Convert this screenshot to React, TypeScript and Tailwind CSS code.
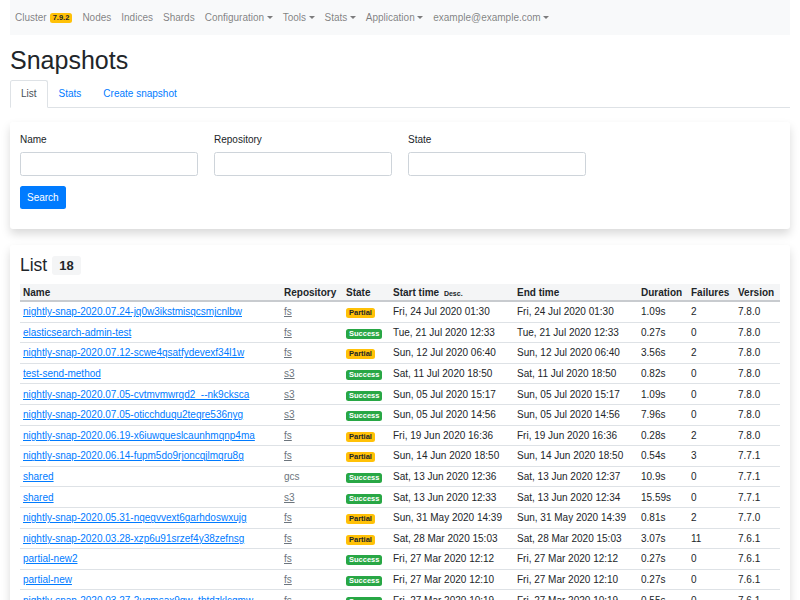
import React from 'react'

type Snapshot = {
  name: string
  repo: string
  state: 'Partial' | 'Success'
  start: string
  end: string
  duration: string
  failures: number
  version: string
}

const snapshots: Snapshot[] = [
  { name: 'nightly-snap-2020.07.24-jq0w3ikstmisqcsmjcnlbw', repo: 'fs', state: 'Partial', start: 'Fri, 24 Jul 2020 01:30', end: 'Fri, 24 Jul 2020 01:30', duration: '1.09s', failures: 2, version: '7.8.0' },
  { name: 'elasticsearch-admin-test', repo: 'fs', state: 'Success', start: 'Tue, 21 Jul 2020 12:33', end: 'Tue, 21 Jul 2020 12:33', duration: '0.27s', failures: 0, version: '7.8.0' },
  { name: 'nightly-snap-2020.07.12-scwe4qsatfydevexf34l1w', repo: 'fs', state: 'Partial', start: 'Sun, 12 Jul 2020 06:40', end: 'Sun, 12 Jul 2020 06:40', duration: '3.56s', failures: 2, version: '7.8.0' },
  { name: 'test-send-method', repo: 's3', state: 'Success', start: 'Sat, 11 Jul 2020 18:50', end: 'Sat, 11 Jul 2020 18:50', duration: '0.82s', failures: 0, version: '7.8.0' },
  { name: 'nightly-snap-2020.07.05-cvtmvmwrqd2_--nk9cksca', repo: 's3', state: 'Success', start: 'Sun, 05 Jul 2020 15:17', end: 'Sun, 05 Jul 2020 15:17', duration: '1.09s', failures: 0, version: '7.8.0' },
  { name: 'nightly-snap-2020.07.05-oticchduqu2teqre536nyg', repo: 's3', state: 'Success', start: 'Sun, 05 Jul 2020 14:56', end: 'Sun, 05 Jul 2020 14:56', duration: '7.96s', failures: 0, version: '7.8.0' },
  { name: 'nightly-snap-2020.06.19-x6iuwqueslcaunhmqnp4ma', repo: 'fs', state: 'Partial', start: 'Fri, 19 Jun 2020 16:36', end: 'Fri, 19 Jun 2020 16:36', duration: '0.28s', failures: 2, version: '7.8.0' },
  { name: 'nightly-snap-2020.06.14-fupm5do9rjoncqjlmqru8g', repo: 'fs', state: 'Partial', start: 'Sun, 14 Jun 2020 18:50', end: 'Sun, 14 Jun 2020 18:50', duration: '0.54s', failures: 3, version: '7.7.1' },
  { name: 'shared', repo: 'gcs', state: 'Success', start: 'Sat, 13 Jun 2020 12:36', end: 'Sat, 13 Jun 2020 12:37', duration: '10.9s', failures: 0, version: '7.7.1' },
  { name: 'shared', repo: 's3', state: 'Success', start: 'Sat, 13 Jun 2020 12:33', end: 'Sat, 13 Jun 2020 12:34', duration: '15.59s', failures: 0, version: '7.7.1' },
  { name: 'nightly-snap-2020.05.31-nqegvvext6garhdoswxujg', repo: 'fs', state: 'Partial', start: 'Sun, 31 May 2020 14:39', end: 'Sun, 31 May 2020 14:39', duration: '0.81s', failures: 2, version: '7.7.0' },
  { name: 'nightly-snap-2020.03.28-xzp6u91srzef4y38zefnsg', repo: 'fs', state: 'Partial', start: 'Sat, 28 Mar 2020 15:03', end: 'Sat, 28 Mar 2020 15:03', duration: '3.07s', failures: 11, version: '7.6.1' },
  { name: 'partial-new2', repo: 'fs', state: 'Success', start: 'Fri, 27 Mar 2020 12:12', end: 'Fri, 27 Mar 2020 12:12', duration: '0.27s', failures: 0, version: '7.6.1' },
  { name: 'partial-new', repo: 'fs', state: 'Success', start: 'Fri, 27 Mar 2020 12:10', end: 'Fri, 27 Mar 2020 12:10', duration: '0.27s', failures: 0, version: '7.6.1' },
  { name: 'nightly-snap-2020.03.27-2uqmsax9qw_tbtdzklcgmw', repo: 'fs', state: 'Success', start: 'Fri, 27 Mar 2020 10:19', end: 'Fri, 27 Mar 2020 10:19', duration: '0.55s', failures: 0, version: '7.6.1' },
]

function Caret() {
  return (
    <span className="ml-[2.5px] inline-block align-[2px] border-x-[3px] border-t-[3px] border-x-transparent border-t-current" />
  )
}

function NavItem({ label, dropdown }: { label: string; dropdown?: boolean }) {
  return (
    <a className="px-[5px] leading-[15px] text-black/50">
      {label}
      {dropdown && <Caret />}
    </a>
  )
}

function StateBadge({ state }: { state: Snapshot['state'] }) {
  if (state === 'Partial') {
    return (
      <span className="inline-block rounded-[2.5px] bg-[#ffc107] px-[3px] text-[7.5px] font-bold leading-[10px] text-[#212529]">
        Partial
      </span>
    )
  }
  return (
    <span className="inline-block rounded-[2.5px] bg-[#28a745] px-[3px] text-[7.5px] font-bold leading-[10px] text-white">
      Success
    </span>
  )
}

function Field({ label }: { label: string }) {
  return (
    <div className="flex w-[178px] flex-col">
      <label className="mb-[5px] leading-[15px]">{label}</label>
      <input className="h-[24px] rounded-[2.5px] border border-[#ced4da] bg-white px-[7px] outline-none" />
    </div>
  )
}

export default function App() {
  return (
    <div className="min-h-screen bg-white px-[10px] font-['Liberation_Sans',Arial,sans-serif] text-[10px] text-[#212529]">
      {/* top navbar */}
      <nav className="flex h-[35px] items-center bg-[#f8f9fa]">
        <a className="flex items-center px-[5px] leading-[15px] text-black/50">
          Cluster
          <span className="ml-[3px] rounded-[2.5px] bg-[#ffc107] px-[3px] text-[7.5px] font-bold leading-[10px] text-[#212529]">
            7.9.2
          </span>
        </a>
        <NavItem label="Nodes" />
        <NavItem label="Indices" />
        <NavItem label="Shards" />
        <NavItem label="Configuration" dropdown />
        <NavItem label="Tools" dropdown />
        <NavItem label="Stats" dropdown />
        <NavItem label="Application" dropdown />
        <NavItem label="example@example.com" dropdown />
      </nav>

      <h1 className="mt-[10px] mb-[5px] text-[25px] font-medium leading-[30px]">Snapshots</h1>

      {/* tabs */}
      <div className="flex border-b border-[#dee2e6]">
        <a className="-mb-px rounded-t-[2.5px] border border-[#dee2e6] border-b-white bg-white px-[10px] py-[5px] leading-[15px] text-[#495057]">
          List
        </a>
        <a className="border border-transparent px-[10px] py-[5px] leading-[15px] text-[#007bff]">Stats</a>
        <a className="border border-transparent px-[10px] py-[5px] leading-[15px] text-[#007bff]">Create snapshot</a>
      </div>

      {/* search card */}
      <div className="mt-[14px] rounded-[3px] bg-white p-[10px] shadow-[0_5px_10px_rgba(0,0,0,0.15)]">
        <div className="flex gap-[16px]">
          <Field label="Name" />
          <Field label="Repository" />
          <Field label="State" />
        </div>
        <button className="mt-[10px] mb-[10px] h-[23px] rounded-[2.5px] bg-[#007bff] px-[7px] leading-[15px] text-white">
          Search
        </button>
      </div>

      {/* list card */}
      <div className="mt-[16px] rounded-[3px] bg-white p-[10px] shadow-[0_5px_10px_rgba(0,0,0,0.15)]">
        <h3 className="mb-[8px] flex items-center text-[17.5px] font-medium leading-[21px]">
          List
          <span className="ml-[5px] rounded-[3px] bg-[#f4f5f6] px-[7px] text-[13px] font-bold leading-[19px]">18</span>
        </h3>

        <div className="text-[10px]">
          <div className="flex h-[18px] items-center border-b-2 border-[#c8cbcf] bg-[#f4f5f6] font-bold">
            <div className="w-[261px] px-[3px]">Name</div>
            <div className="w-[62px] px-[3px]">Repository</div>
            <div className="w-[47px] px-[3px]">State</div>
            <div className="w-[124px] px-[3px]">
              Start time <span className="ml-[2px] text-[7px]">Desc.</span>
            </div>
            <div className="w-[124px] px-[3px]">End time</div>
            <div className="w-[50px] px-[3px]">Duration</div>
            <div className="w-[47px] px-[3px]">Failures</div>
            <div className="w-[45px] px-[3px]">Version</div>
          </div>
          {snapshots.map((s, i) => (
            <div key={i} className="flex h-[20.6px] items-center border-b border-[#dee2e6] leading-[15px]">
              <div className="w-[261px] px-[3px]">
                <a className="text-[#007bff] underline">{s.name}</a>
              </div>
              <div className="w-[62px] px-[3px]">
                <a className={s.repo === 'gcs' ? 'text-[#6c757d]' : 'text-[#6c757d] underline'}>{s.repo}</a>
              </div>
              <div className="w-[47px] px-[3px]">
                <StateBadge state={s.state} />
              </div>
              <div className="w-[124px] px-[3px]">{s.start}</div>
              <div className="w-[124px] px-[3px]">{s.end}</div>
              <div className="w-[50px] px-[3px]">{s.duration}</div>
              <div className="w-[47px] px-[3px]">{s.failures}</div>
              <div className="w-[45px] px-[3px]">{s.version}</div>
            </div>
          ))}
        </div>
      </div>
    </div>
  )
}
